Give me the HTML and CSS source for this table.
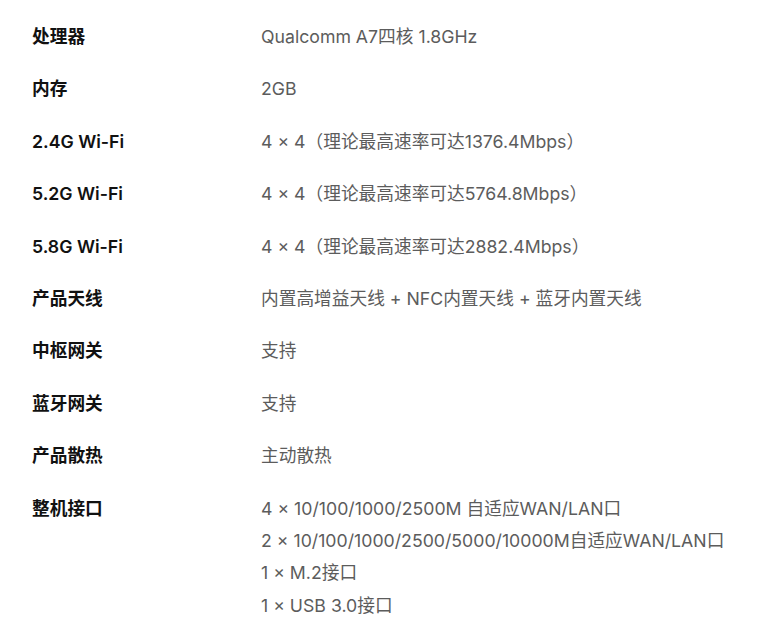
FILE: index.html
```html
<!DOCTYPE html>
<html lang="zh-CN">
<head>
<meta charset="utf-8">
<title>规格参数</title>
<link rel="stylesheet" href="styles.css">
</head>
<body>
<dl class="specs">
  <div class="row"><dt>处理器</dt><dd>Qualcomm A7四核 1.8GHz</dd></div>
  <div class="row"><dt>内存</dt><dd>2GB</dd></div>
  <div class="row"><dt>2.4G Wi-Fi</dt><dd>4 × 4（理论最高速率可达1376.4Mbps）</dd></div>
  <div class="row"><dt>5.2G Wi-Fi</dt><dd>4 × 4（理论最高速率可达5764.8Mbps）</dd></div>
  <div class="row"><dt>5.8G Wi-Fi</dt><dd>4 × 4（理论最高速率可达2882.4Mbps）</dd></div>
  <div class="row"><dt>产品天线</dt><dd>内置高增益天线 + NFC内置天线 + 蓝牙内置天线</dd></div>
  <div class="row"><dt>中枢网关</dt><dd>支持</dd></div>
  <div class="row"><dt>蓝牙网关</dt><dd>支持</dd></div>
  <div class="row"><dt>产品散热</dt><dd>主动散热</dd></div>
  <div class="row"><dt>整机接口</dt><dd>
    <div>4 × 10/100/1000/2500M 自适应WAN/LAN口</div>
    <div>2 × 10/100/1000/2500/5000/10000M自适应WAN/LAN口</div>
    <div>1 × M.2接口</div>
    <div>1 × USB 3.0接口</div>
  </dd></div>
</dl>
</body>
</html>
```
FILE: styles.css
```css
html, body {
  margin: 0;
  padding: 0;
  background: #fff;
}
body {
  font-family: Inter, "Noto Sans CJK SC", sans-serif;
  font-size: 17.7px;
  line-height: 32.4px;
}
.specs {
  margin: 0;
  padding: 21px 0 0 32px;
  display: flex;
  flex-direction: column;
  gap: 20px;
}
.row {
  display: grid;
  grid-template-columns: 229px 1fr;
}
dt {
  font-weight: 600;
  color: #111;
}
dd {
  margin: 0;
  color: #5c5c5c;
}
```
